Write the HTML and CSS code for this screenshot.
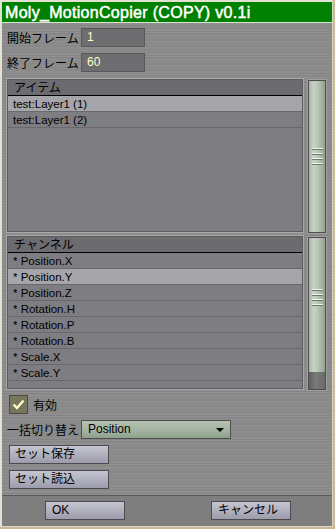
FILE: index.html
```html
<!DOCTYPE html>
<html lang="ja">

<head>
    <meta charset="UTF-8">
    <meta name="viewport" content="width=device-width, initial-scale=1.0">
    <title>Moly_MotionCopier</title>
    <link rel="stylesheet" href="styles.css">
</head>

<body>
    <div class="window">
        <div class="titlebar">Moly_MotionCopier (COPY) v0.1i</div>

        <div class="content">
            <div class="field">
                <label>開始フレーム</label>
                <div class="input">1</div>
            </div>
            <div class="field">
                <label>終了フレーム</label>
                <div class="input">60</div>
            </div>

            <div class="list-row">
                <div class="list">
                    <div class="list-head">アイテム</div>
                    <div class="list-item selected">test:Layer1 (1)</div>
                    <div class="list-item">test:Layer1 (2)</div>
                </div>
                <div class="scrollbar">
                    <div class="thumb full">
                        <div class="grip"><span></span><span></span><span></span><span></span></div>
                    </div>
                </div>
            </div>

            <div class="list-row second">
                <div class="list">
                    <div class="list-head">チャンネル</div>
                    <div class="list-item">* Position.X</div>
                    <div class="list-item selected">* Position.Y</div>
                    <div class="list-item">* Position.Z</div>
                    <div class="list-item">* Rotation.H</div>
                    <div class="list-item">* Rotation.P</div>
                    <div class="list-item">* Rotation.B</div>
                    <div class="list-item">* Scale.X</div>
                    <div class="list-item">* Scale.Y</div>
                </div>
                <div class="scrollbar">
                    <div class="thumb">
                        <div class="grip"><span></span><span></span><span></span><span></span></div>
                    </div>
                    <div class="track"></div>
                </div>
            </div>

            <div class="check-row">
                <div class="checkbox">
                    <svg width="13" height="11" viewBox="0 0 13 11">
                        <path d="M1.5 5.5 L5 9 L11.5 1.5" fill="none" stroke="#fffcc8" stroke-width="2.4" />
                    </svg>
                </div>
                <span>有効</span>
            </div>

            <div class="field select-field">
                <label>一括切り替え</label>
                <div class="select">Position<span class="arrow"></span></div>
            </div>

            <button class="btn wide">セット保存</button>
            <button class="btn wide">セット読込</button>
        </div>

        <div class="footer">
            <button class="btn footer-btn">OK</button>
            <button class="btn footer-btn">キャンセル</button>
        </div>
    </div>
</body>

</html>
```

FILE: styles.css
```css
body {
    margin: 0;
    font-family: 'Liberation Sans', 'Noto Sans CJK JP', sans-serif;
    font-size: 12px;
    color: #000;
    background-color: #c8b898;
}

.window {
    width: 330px;
    height: 524px;
    border-top: 2px solid #e4e0d4;
    border-left: 2px solid #e4e0d4;
    border-right: 1px solid #d8d4c8;
    border-bottom: 1px solid #d8d4c8;
    display: flex;
    flex-direction: column;
    background-color: #8a8a8a;
    /* brushed metal streaks */
    background-image:
        repeating-linear-gradient(to bottom, rgba(255, 255, 255, 0.05) 0 1px, rgba(0, 0, 0, 0.03) 1px 2px, rgba(0, 0, 0, 0) 2px 3px, rgba(255, 255, 255, 0.03) 3px 5px, rgba(0, 0, 0, 0.04) 5px 6px);
}

.titlebar {
    height: 20px;
    line-height: 21px;
    background-color: #008000;
    border-bottom: 1px solid #d8e4d0;
    color: #fff;
    font-size: 16px;
    padding-left: 3px;
    -webkit-text-stroke: 0.5px #fff;
    letter-spacing: 0.3px;
}

.content {
    flex: 1;
    padding: 5px 0 0 5px;
    display: flex;
    flex-direction: column;
}

.field {
    display: flex;
    align-items: center;
    height: 19px;
    margin-bottom: 6px;
}

.field label {
    width: 74px;
    flex-shrink: 0;
}

.input {
    width: 57px;
    height: 17px;
    line-height: 17px;
    border: 1px solid #58575a;
    background-color: #6e6d70;
    color: #ffffc8;
    padding-left: 5px;
}

.list-row {
    display: flex;
    margin-top: 1px;
    height: 153px;
    gap: 5px;
}

.list-row.second {
    margin-top: 4px;
}

.list {
    width: 294px;
    border: 1px solid #5c5b5e;
    outline: 1px solid #a8a8a8;
    background-color: #7e7d81;
    overflow: hidden;
}

.list-head {
    height: 15px;
    line-height: 16px;
    background-color: #6c6b6f;
    border-bottom: 1px solid #000;
    padding-left: 6px;
}

.list-item {
    height: 15px;
    line-height: 16px;
    font-size: 11.5px;
    border-bottom: 1px solid #69686c;
    padding-left: 5px;
}

.list-item.selected {
    background-color: #a6a5a9;
}

.scrollbar {
    width: 16px;
    border: 1px solid #4e4e4e;
    outline: 1px solid #a0a0a0;
    display: flex;
    flex-direction: column;
    margin-top: 1px;
    margin-bottom: -1px;
}

.thumb {
    flex: 1;
    background: linear-gradient(to right, #a8b4a6, #c8d4c6 30%, #b4c2b2 60%, #92a090);
    display: flex;
    align-items: center;
    justify-content: center;
}

.thumb.full {
    align-items: flex-end;
    padding-bottom: 3px;
}

.thumb.full .grip {
    margin-bottom: 64px;
}

.grip {
    display: flex;
    flex-direction: column;
    gap: 3px;
    margin-top: -15px;
}

.grip span {
    display: block;
    width: 11px;
    height: 1px;
    background-color: #eef4ec;
    border-bottom: 1px solid #6e7a6c;
}

.track {
    height: 17px;
    background: linear-gradient(to right, #5e5e5e, #7a7a7a 40%, #6a6a6a);
}

.check-row {
    display: flex;
    align-items: center;
    gap: 5px;
    margin-top: 6px;
    margin-bottom: 6px;
    height: 19px;
    padding-left: 2px;
}

.checkbox {
    width: 17px;
    height: 17px;
    border: 1px solid #4a4a40;
    background-color: #77765c;
    display: flex;
    align-items: center;
    justify-content: center;
}

.select-field {
    margin-bottom: 6px;
}

.select {
    width: 142px;
    height: 17px;
    line-height: 17px;
    border: 1px solid #4e4e4e;
    padding-left: 6px;
    background: linear-gradient(to bottom, #b4c2b0, #a2b2a0 60%, #8ea08c);
    position: relative;
}

.arrow {
    position: absolute;
    right: 6px;
    top: 7px;
    border-left: 4px solid transparent;
    border-right: 4px solid transparent;
    border-top: 4px solid #000;
}

.btn {
    font-family: 'Liberation Sans', 'Noto Sans CJK JP', sans-serif;
    font-size: 12px;
    color: #000;
    text-align: left;
    padding: 0 0 0 5px;
    height: 19px;
    line-height: 17px;
    border: 1px solid #4c4c50;
    background: linear-gradient(to bottom, #c6c6d2, #b0b0be 50%, #9c9cac);
    border-radius: 0;
}

.btn.wide {
    width: 100px;
    margin-left: 2px;
    margin-bottom: 6px;
}

.footer {
    height: 30px;
    border-top: 1px solid #5a5a5a;
    background-color: #7e7e7e;
    display: flex;
    align-items: center;
    gap: 86px;
    padding-left: 43px;
    padding-bottom: 1px;
}

.footer-btn {
    width: 80px;
    padding-left: 6px;
}
```
